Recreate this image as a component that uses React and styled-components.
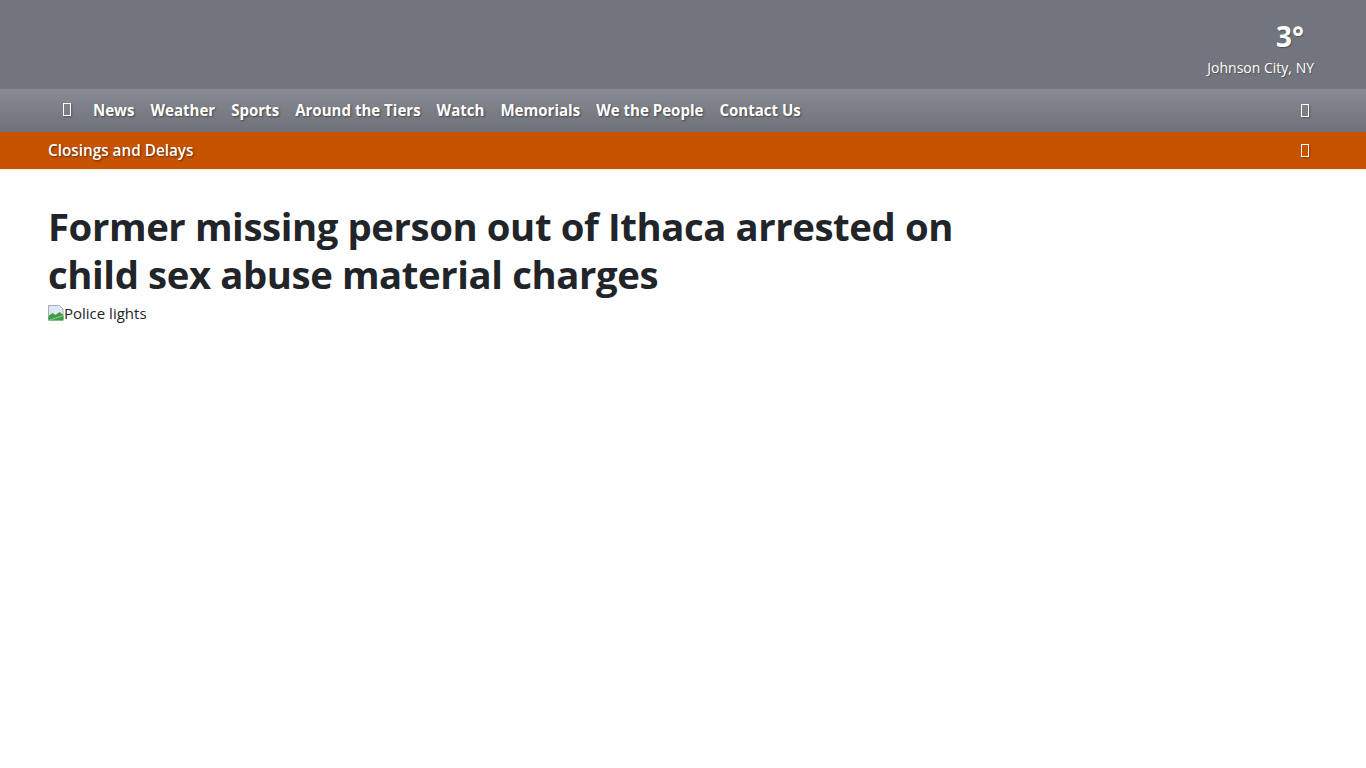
import React from 'react';
import styled, { createGlobalStyle } from 'styled-components';

const GlobalStyle = createGlobalStyle`
  body {
    margin: 0;
    background: #fff;
    font-family: "Open Sans", "Noto Sans", sans-serif;
    color: #212529;
  }
`;

const TopBar = styled.div`
  display: flex;
  justify-content: flex-end;
  align-items: flex-start;
  height: 89px;
  padding: 0 52px 0 48px;
  background: #72757d;
  box-sizing: border-box;
`;

const WeatherBox = styled.div`
  display: flex;
  flex-direction: column;
  align-items: flex-end;
  padding-top: 19px;
  color: #fff;
`;

const Temp = styled.div`
  font-size: 28px;
  font-weight: 700;
  line-height: 34px;
  margin-right: 10px;
  text-shadow: 1px 1px 1px rgba(0, 0, 0, 0.3);
`;

const City = styled.div`
  font-size: 14px;
  line-height: 18px;
  margin-top: 6px;
  text-shadow: 1px 1px 1px rgba(0, 0, 0, 0.3);
`;

const Bar = styled.div`
  display: flex;
  align-items: center;
  justify-content: space-between;
  height: ${(p) => p.$height}px;
  padding: 0 57px 0 48px;
  background: ${(p) => p.$bg};
  box-sizing: border-box;
`;

const NavList = styled.nav`
  display: flex;
  align-items: center;
  margin-top: -2px;
`;

const NavItem = styled.a`
  padding: 0 8px;
  color: #fff;
  font-size: 15.05px;
  font-weight: 700;
  text-decoration: none;
  text-shadow: 1px 1px 2px rgba(0, 0, 0, 0.45);
  white-space: nowrap;
`;

const Glyph = styled.span`
  display: inline-block;
  width: 6px;
  height: 11px;
  border: 1px solid #fff;
  margin: ${(p) => p.$margin || '0'};
  box-shadow: 1px 1px 2px rgba(0, 0, 0, 0.3);
`;

const AlertText = styled.span`
  color: #fff;
  font-size: 15.3px;
  font-weight: 600;
  margin-top: -1px;
  text-shadow: 1px 1px 2px rgba(0, 0, 0, 0.5);
`;

const Divider = styled.div`
  height: 3px;
  background: linear-gradient(#fbeee3, #fff);
`;

const Main = styled.main`
  padding: 30px 48px;
  max-width: 960px;
`;

const Headline = styled.h1`
  margin: 0 0 5px;
  font-size: 38.3px;
  font-weight: 700;
  line-height: 48px;
  letter-spacing: -0.4px;
  color: #212529;
`;

const BrokenImage = styled.div`
  display: flex;
  align-items: center;
  font-size: 15px;
  color: #212529;
`;

const navLinks = [
  'News',
  'Weather',
  'Sports',
  'Around the Tiers',
  'Watch',
  'Memorials',
  'We the People',
  'Contact Us',
];

export default function App() {
  return (
    <>
      <GlobalStyle />
      <TopBar>
        <WeatherBox>
          <Temp>3°</Temp>
          <City>Johnson City, NY</City>
        </WeatherBox>
      </TopBar>
      <Bar $height={43} $bg="linear-gradient(#888b92, #6e7178)">
        <NavList>
          <Glyph $margin="0 14px 0 15px" />
          {navLinks.map((l) => (
            <NavItem key={l} href="#">
              {l}
            </NavItem>
          ))}
        </NavList>
        <Glyph />
      </Bar>
      <Bar $height={37} $bg="#c75300">
        <AlertText>Closings and Delays</AlertText>
        <Glyph />
      </Bar>
      <Divider />
      <Main>
        <Headline>
          Former missing person out of Ithaca arrested on child sex abuse
          material charges
        </Headline>
        <BrokenImage>
          <svg width="16" height="16" viewBox="0 0 16 16">
            <path d="M0.5 0.5h11l3.5 3.5v11H0.5z" fill="#dfe8f2" stroke="#a5adb6" />
            <path d="M0.5 11l4-3 3 2 4-3 4 3v5.5H0.5z" fill="#3f9d45" />
            <path d="M0.5 15.5l15-5" stroke="#8bc98a" strokeWidth="1.2" />
          </svg>
          Police lights
        </BrokenImage>
      </Main>
    </>
  );
}
